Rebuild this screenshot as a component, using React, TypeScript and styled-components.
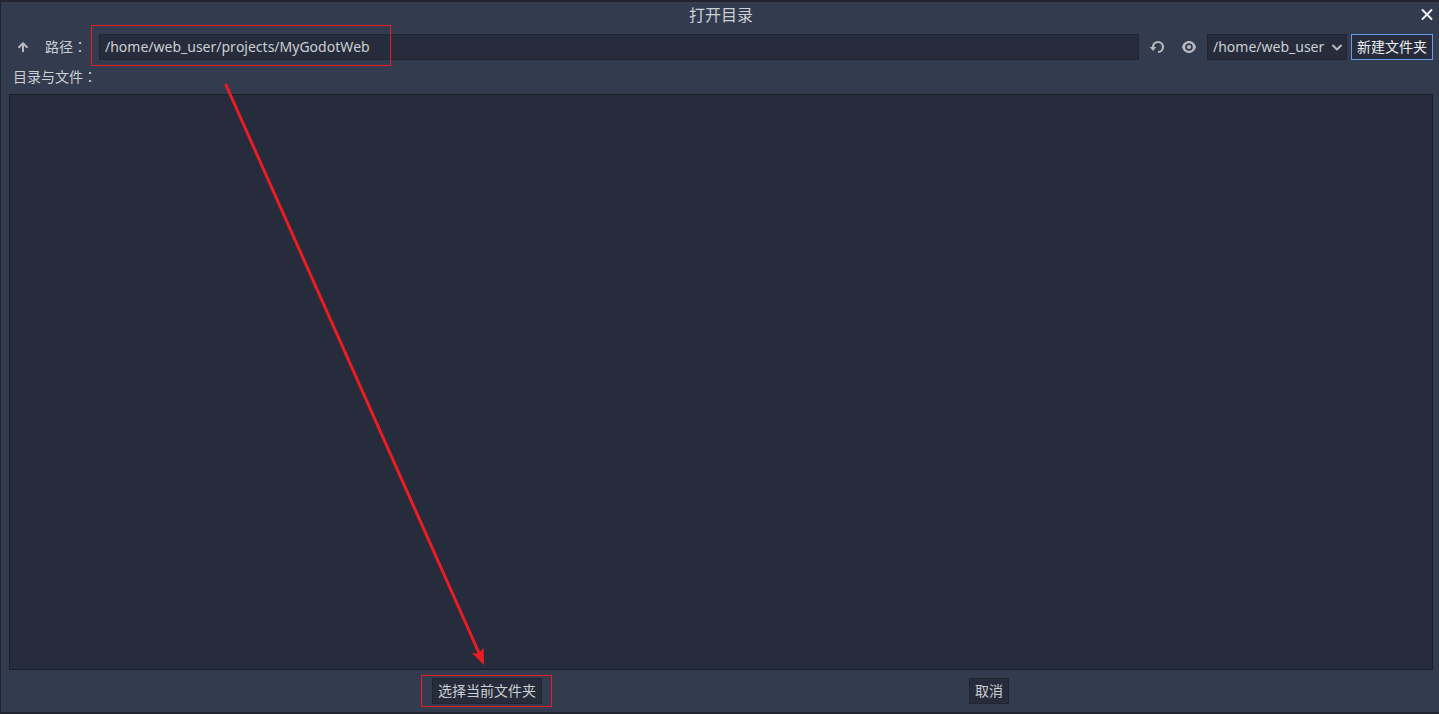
import React, { useState } from 'react';
import styled, { createGlobalStyle } from 'styled-components';

const color = {
  frame: '#202531',
  panel: '#333b4f',
  well: '#262c3b',
  edge: '#1a1e28',
  controlEdge: '#202531',
  text: '#cccfd3',
  bright: '#eceef2',
  icon: '#b7b9be',
  accent: '#699ce8',
  mark: '#ed1c24',
};

const GlobalStyle = createGlobalStyle`
  * { box-sizing: border-box; }
  body {
    margin: 0;
    background: ${color.panel};
    color: ${color.text};
    font: 14px/20px "Noto Sans", "Noto Sans CJK SC", sans-serif;
    font-kerning: none;
  }
  button, input, select { font: inherit; font-kerning: none; color: inherit; }
`;

const Dialog = styled.main`
  position: relative;
  display: flex;
  flex-direction: column;
  min-height: 100vh;
  background: ${color.panel};
  border: solid ${color.frame};
  border-width: 2px 0 2px 1px;
`;

const TitleBar = styled.header`
  display: grid;
  grid-template-columns: 1fr auto 1fr;
  align-items: center;
  height: 26px;
  padding: 0 4px 0 6px;
`;

const Title = styled.h1`
  grid-column: 2;
  margin: 0;
  font-size: 16px;
  line-height: 24px;
  font-weight: 400;
`;

const IconButton = styled.button<{ $size?: number }>`
  display: grid;
  place-items: center;
  flex: none;
  width: ${(p) => p.$size ?? 28}px;
  height: ${(p) => p.$size ?? 26}px;
  padding: 0;
  border: 0;
  background: none;
  color: ${color.icon};
`;

const CloseButton = styled(IconButton)`
  justify-self: end;
  color: ${color.bright};
`;

const Toolbar = styled.div`
  display: flex;
  align-items: center;
  gap: 4px;
  margin-top: 6px;
  padding: 0 6px 0 8px;
`;

const PathLabel = styled.label`
  flex: none;
  width: 54px;
  padding: 0 0 2px 4px;
`;

const Colon = styled.span`
  font-family: "Noto Sans CJK TC", sans-serif;
`;

const Highlight = styled.span<{ $width: number; $height: number; $left: number; $top: number }>`
  position: absolute;
  left: ${(p) => p.$left}px;
  top: ${(p) => p.$top}px;
  width: ${(p) => p.$width}px;
  height: ${(p) => p.$height}px;
  border: 1px solid ${color.mark};
  pointer-events: none;
`;

const PathField = styled.div`
  position: relative;
  flex: 1;
  display: flex;
`;

const PathInput = styled.input`
  width: 100%;
  height: 26px;
  padding: 0 5px 2px;
  border: 1px solid ${color.controlEdge};
  border-radius: 0;
  outline: 0;
  background: ${color.well};
`;

const DriveField = styled.div`
  position: relative;
  flex: none;
  width: 140px;
  color: ${color.icon};
`;

const DriveSelect = styled.select`
  display: block;
  appearance: none;
  width: 100%;
  height: 26px;
  padding: 0 20px 0 5px;
  border: 1px solid ${color.controlEdge};
  border-radius: 0;
  background: ${color.well};
  color: ${color.text};
`;

const Chevron = styled.svg`
  position: absolute;
  right: 2px;
  top: 5px;
  pointer-events: none;
`;

const TextButton = styled.button<{ $focused?: boolean }>`
  flex: none;
  height: 26px;
  padding: 0 5px;
  border: 1px solid ${(p) => (p.$focused ? color.accent : color.controlEdge)};
  background: ${color.well};
  color: ${(p) => (p.$focused ? color.bright : color.text)};
  white-space: nowrap;
`;

const ListLabel = styled.h2`
  margin: 6px 0 8px;
  padding-left: 12px;
  font-size: 14px;
  line-height: 20px;
  height: 20px;
  font-weight: 400;
`;

const FileList = styled.section`
  flex: 1;
  margin: 0 6px 0 8px;
  border: 1px solid ${color.edge};
  background: ${color.well};
`;

const Footer = styled.footer`
  display: flex;
  justify-content: space-evenly;
  padding: 8px 3px 8px 4px;
`;

const FooterItem = styled.div`
  position: relative;
  display: flex;
`;

const Arrow = styled.svg`
  position: absolute;
  left: 215px;
  top: 78px;
  color: ${color.mark};
  pointer-events: none;
`;

const WithColon = ({ children }: { children: string }) => (
  <>
    {children}
    <Colon lang="zh-TW">：</Colon>
  </>
);

const UpIcon = () => (
  <svg width="16" height="16" viewBox="0 0 16 16" fill="none" stroke="currentColor" strokeWidth="2" strokeLinejoin="round" aria-hidden="true">
    <path d="M8 13V5M3.500 8.700 8 4.200l4.500 4.500" />
  </svg>
);

const ReloadIcon = () => (
  <svg width="16" height="16" viewBox="0 0 16 16" aria-hidden="true">
    <path d="M4 8.500V8a5 5 0 1 1 5 5" fill="none" stroke="currentColor" strokeWidth="2.200" />
    <path d="M.6 8h6.800L4 12z" fill="currentColor" />
  </svg>
);

const EyeIcon = () => (
  <svg width="16" height="16" viewBox="0 0 16 16" aria-hidden="true">
    <path
      d="M8 2C4.500 2 2 4.500 1 8c1 3.500 3.500 6 7 6s6-2.500 7-6c-1-3.500-3.500-6-7-6zm0 2.200a3.800 3.800 0 1 1 0 7.600 3.800 3.800 0 0 1 0-7.600z"
      fill="currentColor"
      fillRule="evenodd"
    />
    <circle cx="8" cy="8" r="2" fill="currentColor" />
  </svg>
);

const CloseIcon = () => (
  <svg width="16" height="16" viewBox="0 0 16 16" fill="none" stroke="currentColor" strokeWidth="2" strokeLinecap="round" aria-hidden="true">
    <path d="M3.500 3l9 9M12.500 3l-9 9" />
  </svg>
);

export default function App() {
  const [path, setPath] = useState('/home/web_user/projects/MyGodotWeb');

  return (
    <>
      <GlobalStyle />
      <Dialog lang="zh-CN">
        <TitleBar>
          <Title>打开目录</Title>
          <CloseButton $size={16} aria-label="关闭">
            <CloseIcon />
          </CloseButton>
        </TitleBar>

        <Toolbar>
          <IconButton aria-label="上一级">
            <UpIcon />
          </IconButton>
          <PathLabel htmlFor="path">
            <WithColon>路径</WithColon>
          </PathLabel>
          <PathField>
            <PathInput id="path" value={path} spellCheck={false} onChange={(e) => setPath(e.target.value)} />
            <Highlight $left={-8} $top={-9} $width={300} $height={41} />
          </PathField>
          <IconButton aria-label="刷新">
            <ReloadIcon />
          </IconButton>
          <IconButton aria-label="显示隐藏文件">
            <EyeIcon />
          </IconButton>
          <DriveField>
            <DriveSelect aria-label="驱动器">
              <option>/home/web_user</option>
            </DriveSelect>
            <Chevron width="16" height="16" viewBox="0 0 16 16" fill="none" stroke="currentColor" strokeWidth="2" strokeLinecap="round" strokeLinejoin="round">
              <path d="M4 6.500 8 10.500 12 6.500" />
            </Chevron>
          </DriveField>
          <TextButton $focused>新建文件夹</TextButton>
        </Toolbar>

        <ListLabel>
          <WithColon>目录与文件</WithColon>
        </ListLabel>
        <FileList aria-label="目录与文件" />

        <Footer>
          <FooterItem>
            <TextButton>选择当前文件夹</TextButton>
            <Highlight $left={-11} $top={-3} $width={131} $height={32} />
          </FooterItem>
          <FooterItem>
            <TextButton>取消</TextButton>
          </FooterItem>
        </Footer>

        <Arrow width="280" height="590" viewBox="216 80 280 590" aria-hidden="true">
          <path d="M226 85 479 653" stroke="currentColor" strokeWidth="3" strokeLinecap="round" />
          <path d="M484 665 472 653 478.500 653.500 483.500 648z" fill="currentColor" />
        </Arrow>
      </Dialog>
    </>
  );
}
